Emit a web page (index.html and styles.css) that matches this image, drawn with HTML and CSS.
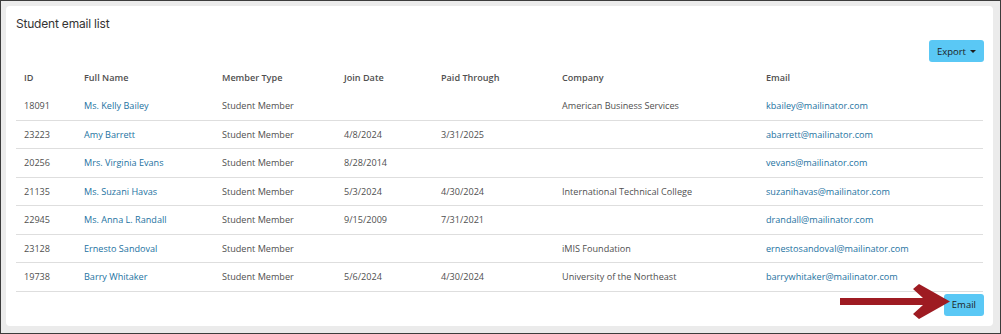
FILE: index.html
```html
<!DOCTYPE html>
<html>
<head>
<meta charset="utf-8">
<link rel="stylesheet" href="styles.css">
</head>
<body>
<div class="frame">
  <div class="panel">
    <h1 class="title">Student email list</h1>
    <div class="toolbar"><button class="btn">Export <span class="caret"></span></button></div>
    <table class="grid">
      <colgroup>
        <col style="width:60px"><col style="width:138px"><col style="width:122px"><col style="width:97px"><col style="width:121px"><col style="width:204px"><col style="width:225px">
      </colgroup>
      <thead>
        <tr><th>ID</th><th>Full Name</th><th>Member Type</th><th>Join Date</th><th>Paid Through</th><th>Company</th><th>Email</th></tr>
      </thead>
      <tbody>
        <tr><td>18091</td><td><a>Ms. Kelly Bailey</a></td><td>Student Member</td><td></td><td></td><td>American Business Services</td><td><a>kbailey@mailinator.com</a></td></tr>
        <tr><td>23223</td><td><a>Amy Barrett</a></td><td>Student Member</td><td>4/8/2024</td><td>3/31/2025</td><td></td><td><a>abarrett@mailinator.com</a></td></tr>
        <tr><td>20256</td><td><a>Mrs. Virginia Evans</a></td><td>Student Member</td><td>8/28/2014</td><td></td><td></td><td><a>vevans@mailinator.com</a></td></tr>
        <tr><td>21135</td><td><a>Ms. Suzani Havas</a></td><td>Student Member</td><td>5/3/2024</td><td>4/30/2024</td><td>International Technical College</td><td><a>suzanihavas@mailinator.com</a></td></tr>
        <tr><td>22945</td><td><a>Ms. Anna L. Randall</a></td><td>Student Member</td><td>9/15/2009</td><td>7/31/2021</td><td></td><td><a>drandall@mailinator.com</a></td></tr>
        <tr><td>23128</td><td><a>Ernesto Sandoval</a></td><td>Student Member</td><td></td><td></td><td>iMIS Foundation</td><td><a>ernestosandoval@mailinator.com</a></td></tr>
        <tr><td>19738</td><td><a>Barry Whitaker</a></td><td>Student Member</td><td>5/6/2024</td><td>4/30/2024</td><td>University of the Northeast</td><td><a>barrywhitaker@mailinator.com</a></td></tr>
      </tbody>
    </table>
    <div class="footer"><button class="btn">Email</button></div>
  </div>
  <svg class="arrow" viewBox="838 283 114 37" width="114" height="37">
    <polygon points="840,298 923,298 913,289 919,284 950,301.5 919,319 913,314 923,305 840,305" fill="#9e1b22"/>
  </svg>
</div>
</body>
</html>
```

FILE: styles.css
```css
html, body { margin: 0; padding: 0; }
body { font-family: "Open Sans", "Liberation Sans", sans-serif; }
.frame {
  position: relative;
  width: 1001px;
  height: 334px;
  box-sizing: border-box;
  border: 1px solid #3c3c3c;
  background: #ebebeb;
  padding: 5px 7px 7px 5px;
}
.panel {
  background: #fff;
  border-radius: 4px;
  height: 100%;
  box-sizing: border-box;
  padding: 9px 9px 0 10px;
}
.title {
  margin: 0;
  font-family: "Inter", "Open Sans", sans-serif;
  font-weight: 400;
  font-size: 12px;
  line-height: 18px;
  color: #333;
  letter-spacing: -0.2px;
}
.toolbar, .footer { display: flex; justify-content: flex-end; }
.toolbar { margin-top: 7px; }
.footer { margin-top: 2px; }
.btn {
  background: #5ac8f5;
  border: none;
  border-radius: 3px;
  height: 22px;
  padding: 0 8px;
  font-family: "Open Sans", sans-serif;
  font-size: 9.5px;
  color: #1d1d1d;
  display: flex;
  align-items: center;
  gap: 4px;
}
.caret {
  width: 0; height: 0;
  border-left: 3px solid transparent;
  border-right: 3px solid transparent;
  border-top: 3px solid #1d1d1d;
}
.grid {
  width: 967px;
  table-layout: fixed;
  border-collapse: separate;
  border-spacing: 0;
  font-size: 9.1px;
  color: #4f4f4f;
}
.grid th {
  text-align: left;
  font-weight: 600;
  padding: 9px 8px 7px;
  line-height: 14px;
  color: #505050;
}
.grid td {
  padding: 7px 8px 6px;
  line-height: 14.5px;
  border-bottom: 1px solid #dedede;
  white-space: nowrap;
}
.grid a { color: #23729f; text-decoration: none; }
.arrow { position: absolute; left: 837px; top: 282px; }
```
